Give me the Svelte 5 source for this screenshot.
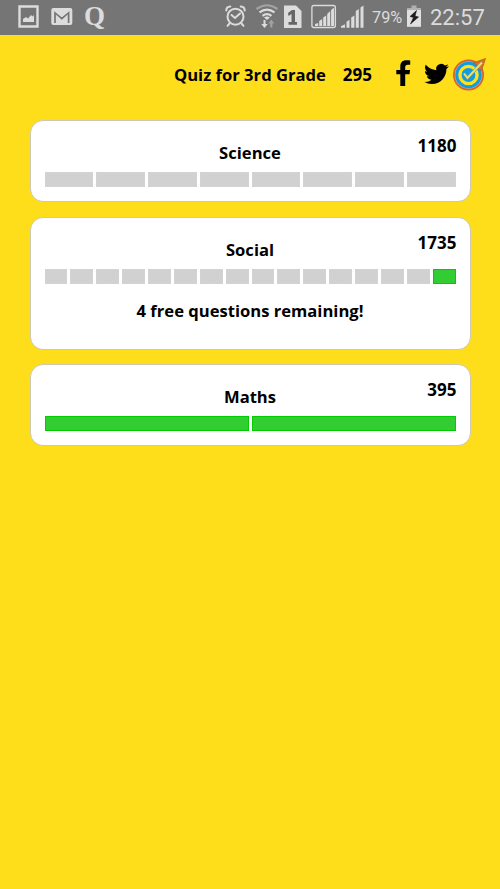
<script lang="ts">
    type Subject = {
        name: string;
        score: number;
        levels: number;
        done: number; // completed levels, counted from the right
        note?: string;
    };

    const subjects: Subject[] = [
        { name: 'Science', score: 1180, levels: 8, done: 0 },
        { name: 'Social', score: 1735, levels: 16, done: 1, note: '4 free questions remaining!' },
        { name: 'Maths', score: 395, levels: 2, done: 2 }
    ];

    const total = 295;
</script>

<div class="screen">
    <div class="status">
        <div class="group">
            <!-- Picture -->
            <svg width="21" height="35" viewBox="18 0 21 35">
                <path d="M19.5 6.5h18v20h-18z" fill="none" stroke="#dcdcdc" stroke-width="2.4" />
                <path d="M23 22v-3l3-2 2 1.500 3-3.500 1.500 1.500 1.500-1.500v7z" fill="#dcdcdc" />
            </svg>
            <!-- Mail -->
            <svg class="mail" width="22" height="35" viewBox="51 0 22 35">
                <rect x="51.300" y="8" width="21" height="17" rx="2" fill="#dcdcdc" />
                <path d="M55 23V12.500l6.800 6 6.800-6V23" fill="none" stroke="#757575" stroke-width="1.700" />
                <path d="M53.500 9.500l8.300 6.500 8.300-6.500" fill="none" stroke="#dcdcdc" stroke-width="2" />
            </svg>
            <span class="quora">Q</span>
        </div>

        <div class="group">
            <!-- Alarm -->
            <svg width="22" height="35" viewBox="225 0 22 35">
                <g fill="none" stroke="#dcdcdc" stroke-width="2" stroke-linecap="round">
                    <circle cx="235.500" cy="16.700" r="8" />
                    <path d="M231.500 15l3.500 3 5-4.500" />
                    <path d="M226.300 10.500q0-3.800 4-4M244.700 10.500q0-3.800-4-4M229.500 23.500l-2 2.300M241.500 23.500l2 2.300" />
                </g>
            </svg>
            <!-- Wifi -->
            <svg class="wifi" width="24" height="35" viewBox="255 0 24 35">
                <g fill="none" stroke="#dcdcdc" stroke-width="2.200">
                    <path d="M256.500 9q10.500-7.500 21 0" stroke="#a2a2a2" />
                    <path d="M259.500 12.300q7.500-5.500 15 0" />
                    <path d="M262.500 15.800q4.500-3.400 9 0" />
                </g>
                <path d="M267 20l-3-2.500q3-2 6 0z" fill="#dcdcdc" />
                <path d="M263.500 20h2v4h2.200l-3.200 4-3.200-4h2.200z" fill="#dcdcdc" />
                <path d="M270.200 27.500h2.200v-4h2l-3.100-4-3.100 4h2z" fill="#a2a2a2" />
            </svg>
            <!-- SIM -->
            <svg class="sim" width="18" height="35" viewBox="284 0 18 35">
                <path d="M284 5.500h12l5.500 5.500v17H284z" fill="#dcdcdc" />
                <path d="M288 13l4-3h3v12.500h-3.500V14l-3 2zM288.500 22h8.500v2.700h-8.500z" fill="#666" />
            </svg>
            <svg class="signal-box" width="26" height="35" viewBox="311 0 26 35">
                <rect x="311.900" y="5.500" width="23.500" height="22" rx="2" fill="none" stroke="#dcdcdc" stroke-width="1.300" />
                <path d="M315 26v-2l3.200-1v3zM319.200 26v-5l3-2v7zM323.200 26v-8.500l3-2V26zM327.200 26V14l3-3v15zM331.100 26V10l3-2.500V26z" fill="#dcdcdc" />
            </svg>
            <svg class="signal" width="24" height="35" viewBox="341 0 24 35">
                <path d="M341 27.800v-1.500l4-2v3.500zM346.500 27.800v-6l3-2v8zM351.200 27.800V17.500l3.200-2v12.300zM355.800 27.800V11l3-2v18.800zM360.500 27.800V7.500l3-2v22.300z" fill="#dcdcdc" />
            </svg>
            <span class="percent">79%</span>
            <!-- Battery -->
            <svg class="battery" width="15" height="35" viewBox="407 0 15 35">
                <path d="M411.500 5.500h5v2.500h4.500v8h-14V8h4.500z" fill="#b0b0b0" />
                <path d="M407 10h14v16.800h-14z" fill="#e0e0e0" />
                <path d="M416.500 10.500l-6.500 6 3.500 1-3 6.500 8-7-3.500-1z" fill="#1c1c1c" stroke="#1c1c1c" stroke-width=".6" />
            </svg>
            <span class="clock">22:57</span>
        </div>
    </div>

    <header>
        <h1>Quiz for 3rd Grade</h1>
        <span class="total">{total}</span>
        <!-- Facebook -->
        <svg class="facebook" width="15" height="28" viewBox="396 59 15 28">
            <path d="M400.300 85V73.300h-4v-4.400h4v-3.400c0-4.200 2.300-6.200 6-6.200 1.600 0 3 .1 3.900.3v4.200h-2.400c-2 0-2.600.9-2.600 2.500v2.600h4.900l-.6 4.400h-4.300V85z" />
        </svg>
        <!-- Twitter -->
        <svg class="twitter" width="25" height="28" viewBox="0 -1.500 24 27">
            <path d="M23.950 4.570a10 10 0 0 1-2.820.77 4.960 4.960 0 0 0 2.160-2.720c-.95.550-2 .95-3.120 1.180a4.920 4.920 0 0 0-8.380 4.480C7.690 8.090 4.070 6.130 1.640 3.160a4.820 4.820 0 0 0-.67 2.480c0 1.710.87 3.210 2.190 4.100a4.900 4.900 0 0 1-2.230-.62v.06a4.920 4.920 0 0 0 3.950 4.830 5 5 0 0 1-2.210.08 4.940 4.940 0 0 0 4.600 3.420A9.870 9.870 0 0 1 0 19.540a13.990 13.990 0 0 0 7.560 2.210c9.050 0 14-7.500 14-13.980 0-.21 0-.42-.02-.63a9.940 9.940 0 0 0 2.460-2.550z" />
        </svg>
        <!-- Target with arrow -->
        <svg class="target" width="33" height="35" viewBox="453 56 33 35">
            <circle cx="468.500" cy="74" r="15.500" fill="#d9622b" />
            <circle cx="468.500" cy="74" r="13.800" fill="#b8b39a" />
            <circle cx="468.500" cy="74" r="13.200" fill="#109ce2" />
            <circle cx="468.500" cy="74" r="8.600" fill="#109ce2" stroke="#ffe11b" stroke-width="3.400" />
            <path d="M485.500 57.500l-12.500 4.500 3.500 1.500 1.500 4 3.500 2z" fill="#e96a20" stroke="#a7622c" stroke-width=".8" />
            <path d="M464 72.500l3.500 4.500 14.500-15.500" fill="none" stroke="#5d9a9a" stroke-width="2.900" />
            <path d="M464 72.500l3.500 4.500 14.500-15.500" fill="none" stroke="#f6dc58" stroke-width="2" />
        </svg>
    </header>

    <main>
        {#each subjects as subject}
            <section class="card">
                <div class="top">
                    <h2>{subject.name}</h2>
                    <span class="score">{subject.score}</span>
                </div>
                <div class="levels">
                    {#each Array(subject.levels) as _, i}
                        <div class="level" class:done={i >= subject.levels - subject.done}></div>
                    {/each}
                </div>
                {#if subject.note}
                    <p>{subject.note}</p>
                {/if}
            </section>
        {/each}
    </main>
</div>

<style>
    :global(body) {
        margin: 0;
        background: #fedd1b;
    }

    .screen {
        width: 500px;
        height: 889px;
        overflow: hidden;
        background: #fedd1b;
        color: #000;
        font-family: 'Open Sans', sans-serif;
        font-size: 16.6px;
        font-weight: 700;
    }

    svg {
        display: block;
        flex: none;
    }

    h1,
    h2,
    p {
        margin: 0;
        font-size: inherit;
        font-weight: inherit;
    }

    .status {
        display: flex;
        justify-content: space-between;
        box-sizing: border-box;
        height: 35px;
        padding: 0 15px 0 18px;
        background: #757575;
        color: #dcdcdc;
        font-family: Roboto, sans-serif;
        font-weight: 400;
    }

    .group {
        display: flex;
        line-height: 35px;
        white-space: nowrap;
    }

    .mail {
        margin-left: 12px;
    }

    .quora {
        margin-left: 11px;
        font-family: 'Liberation Serif', serif;
        font-size: 27px;
        font-weight: 700;
        line-height: 33px;
    }

    .wifi {
        margin-left: 8px;
    }

    .sim {
        margin-left: 5px;
    }

    .signal-box {
        margin-left: 9px;
    }

    .signal {
        margin-left: 4px;
    }

    .percent {
        width: 35px;
        margin-left: 7px;
        font-size: 16.3px;
    }

    .clock {
        width: 55px;
        margin-left: 8px;
        font-size: 22px;
    }

    header {
        display: flex;
        align-items: center;
        justify-content: flex-end;
        height: 78px;
        padding: 0 14px 7px 0;
        line-height: 26px;
    }

    .total {
        margin-left: 17px;
        font-size: 17px;
    }

    h1,
    .total {
        padding-top: 2px;
    }

    .facebook {
        margin-left: 24px;
    }

    .twitter {
        margin-left: 13px;
    }

    .target {
        margin-left: 4px;
    }

    main {
        display: flex;
        flex-direction: column;
        gap: 14.5px;
        padding: 0 29.5px;
    }

    .card {
        box-sizing: border-box;
        height: 82px;
        padding: 13px 14px 0;
        background: #fff;
        border: 1px solid #ccc8b4;
        border-radius: 13px;
    }

    .card:has(p) {
        height: 133px;
    }

    .top {
        display: grid;
        height: 38px;
        line-height: 24px;
    }

    h2,
    .score {
        grid-area: 1 / 1;
    }

    h2 {
        padding-top: 7px;
        text-align: center;
    }

    .score {
        justify-self: end;
        margin-right: -1px;
        font-size: 17px;
    }

    .levels {
        display: flex;
        gap: 3px;
    }

    .level {
        flex: 1;
        box-sizing: border-box;
        height: 15px;
        background: #d1d1d1;
        border: 1px solid #d3d3d3;
    }

    .level.done {
        background: #32cd32;
        border-color: #0c0;
    }

    p {
        margin-top: 15px;
        line-height: 24px;
        text-align: center;
    }
</style>
